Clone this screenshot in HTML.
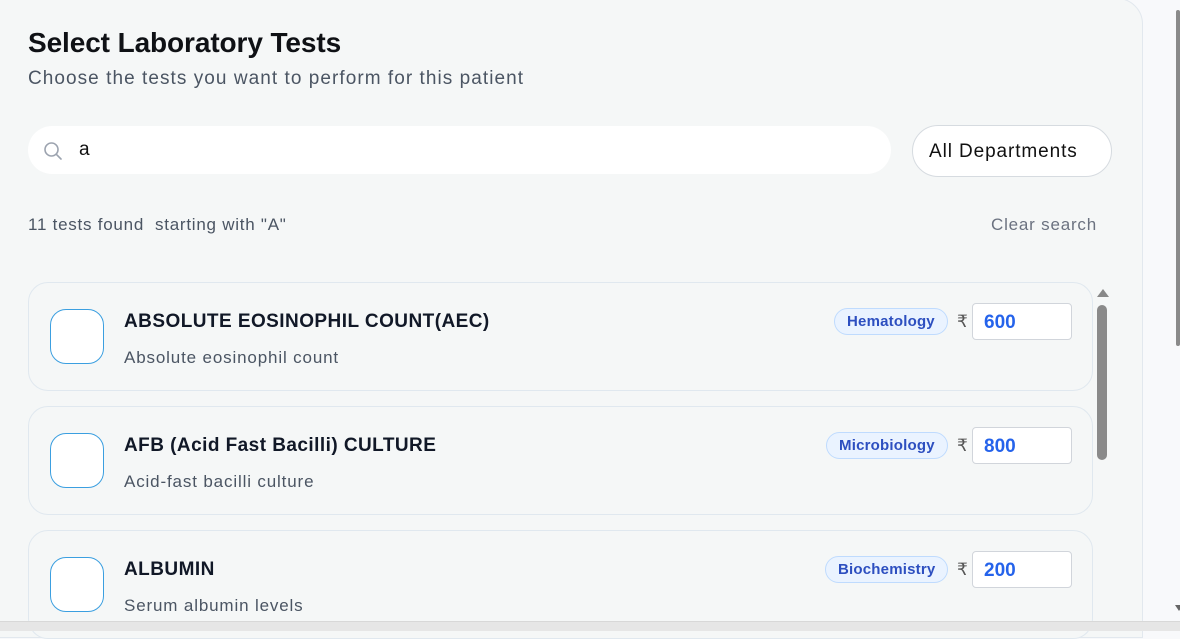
<!DOCTYPE html>
<html><head><style>
*{box-sizing:border-box;margin:0;padding:0}
body{width:1180px;height:631px;overflow:hidden;background:#f8f9fb;font-family:"Liberation Sans",sans-serif;position:relative}
.panel{position:absolute;left:-2px;top:-2px;width:1145px;height:640px;background:#f5f7f7;border:1px solid #e2e8ee;border-radius:0 26px 0 0}
h1{position:absolute;left:28px;top:27px;font-size:28px;font-weight:bold;color:#0f1115;letter-spacing:-0.1px}
.sub{position:absolute;left:28px;top:68px;font-size:19px;color:#4b5563;letter-spacing:1.05px}
.search{position:absolute;left:28px;top:126px;width:863px;height:48px;background:#fff;border-radius:24px}
.search svg{position:absolute;left:15px;top:15px}
.search span{position:absolute;left:51px;top:13px;font-size:19px;color:#111}
.dept{position:absolute;left:912px;top:125px;width:200px;height:52px;background:#fff;border:1px solid #d6dbe0;border-radius:26px;font-size:19px;color:#111;padding:15px 0 0 16px;letter-spacing:0.9px}
.found{position:absolute;left:28px;top:215px;font-size:17px;color:#4b5563;letter-spacing:0.75px}
.clear{position:absolute;left:991px;top:215px;font-size:17px;color:#6b7280;letter-spacing:0.8px}
.card{position:absolute;left:28px;width:1065px;height:109px;border:1px solid #e0e8ef;border-radius:20px;background:#f5f7f7}
.cb{position:absolute;left:21px;top:26px;width:54px;height:55px;border:1px solid #3b9fe0;border-radius:16px;background:#fff}
.t{position:absolute;left:95px;top:28px;font-size:19px;font-weight:bold;color:#111827;letter-spacing:0.45px}
.d{position:absolute;left:95px;top:65px;font-size:17px;color:#4b5563;letter-spacing:0.85px}
.tag{position:absolute;top:25px;height:27px;border:1px solid #bfdbfe;background:#eaf3ff;border-radius:14px;font-size:15px;font-weight:bold;color:#2d4fc0;padding:4px 12px 0;letter-spacing:0.2px}
.rs{position:absolute;left:928px;top:29px;font-size:17px;color:#555}
.pr{position:absolute;left:943px;top:20px;width:100px;height:37px;background:#fff;border:1px solid #d1d5db;border-radius:4px;font-size:19px;font-weight:bold;color:#2563eb;padding:8px 0 0 11px}
.sb{position:absolute;left:1093px;top:283px;width:19px;height:340px;background:#f5f7f7}
.bottom{position:absolute;left:0;top:621px;width:1180px;height:10px;background:#e6e6e6;border-top:1px solid #d8d8d8}
</style></head><body>
<div class="panel"></div>
<h1>Select Laboratory Tests</h1>
<div class="sub">Choose the tests you want to perform for this patient</div>
<div class="search"><svg width="20" height="20" viewBox="0 0 20 20"><circle cx="8.5" cy="8.5" r="6.5" fill="none" stroke="#9ca3af" stroke-width="1.6"/><path d="M13.3 13.3L18 18" stroke="#9ca3af" stroke-width="1.6" stroke-linecap="round"/></svg><span>a</span></div>
<div class="dept">All Departments</div>
<div class="found">11 tests found &nbsp;starting with "A"</div>
<div class="clear">Clear search</div>

<div class="card" style="top:282px"><div class="cb"></div><div class="t">ABSOLUTE EOSINOPHIL COUNT(AEC)</div><div class="d">Absolute eosinophil count</div><div class="tag" style="left:805px">Hematology</div><div class="rs">₹</div><div class="pr">600</div></div>
<div class="card" style="top:406px"><div class="cb"></div><div class="t">AFB (Acid Fast Bacilli) CULTURE</div><div class="d">Acid-fast bacilli culture</div><div class="tag" style="left:797px">Microbiology</div><div class="rs">₹</div><div class="pr">800</div></div>
<div class="card" style="top:530px"><div class="cb"></div><div class="t">ALBUMIN</div><div class="d">Serum albumin levels</div><div class="tag" style="left:796px">Biochemistry</div><div class="rs">₹</div><div class="pr">200</div></div>

<div class="sb"><div style="position:absolute;left:4px;top:6px;width:0;height:0;border-left:6px solid transparent;border-right:6px solid transparent;border-bottom:8px solid #888"></div><div style="position:absolute;left:4px;top:22px;width:10px;height:155px;background:#8a8a8a;border-radius:5px"></div></div>
<div style="position:absolute;left:1176px;top:10px;width:4px;height:336px;background:#8a8a8a;border-radius:2px"></div>
<div style="position:absolute;left:1175px;top:605px;width:0;height:0;border-left:4px solid transparent;border-right:4px solid transparent;border-top:6px solid #666"></div>
<div class="bottom"></div>
</body></html>
